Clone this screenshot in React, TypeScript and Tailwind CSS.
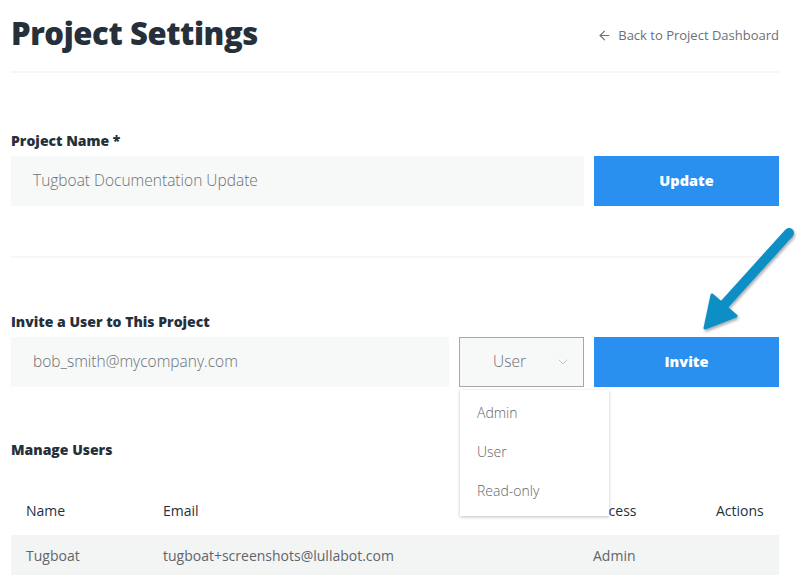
import { ArrowLeft, ChevronDown } from 'lucide-react';

const users = [{ name: 'Tugboat', email: 'tugboat+screenshots@lullabot.com', access: 'Admin' }];

function PointerArrow() {
  return (
    <svg className="absolute left-[696px] top-[222px] pointer-events-none" width="103" height="115" viewBox="0 0 103 115">
      <defs>
        <filter id="sh" x="-20%" y="-20%" width="140%" height="140%">
          <feDropShadow dx="1" dy="2" stdDeviation="1.5" floodColor="#000" floodOpacity="0.35" />
        </filter>
      </defs>
      <g filter="url(#sh)">
        <line x1="93" y1="11" x2="27" y2="84" stroke="#0a8fc6" strokeWidth="10" strokeLinecap="round" />
        <path d="M9 106 L16 73 L40 94 Z" fill="#0a8fc6" stroke="#0a8fc6" strokeWidth="3" strokeLinejoin="round" />
      </g>
    </svg>
  );
}

export default function App() {
  return (
    <div className="relative w-[799px] h-[586px] overflow-hidden bg-white font-['Open_Sans',sans-serif] text-[#25303b]">
      <div className="pl-[11px] pr-[20px]">
        {/* Header */}
        <div className="flex items-end justify-between pt-[9px] pb-[14px] border-b-2 border-[#f5f7f7]">
          <h1 className="font-extrabold text-[31px] leading-[48px] tracking-[-0.4px]">Project Settings</h1>
          <a className="flex items-center gap-[6px] text-[13px] text-[#6b7178] mb-[12px]">
            <ArrowLeft className="w-[15px] h-[15px]" strokeWidth={1.75} />
            Back to Project Dashboard
          </a>
        </div>

        {/* Project name */}
        <div className="pt-[58px] pb-[50px] border-b-2 border-[#f5f7f7]">
          <label className="block font-extrabold text-[14px] leading-[20px] mb-[5px]">Project Name *</label>
          <div className="flex gap-[10px]">
            <div className="flex-1 h-[50px] bg-[#f7f8f8] flex items-center pl-[22px] text-[15.5px] font-light text-[#6b7075]">
              Tugboat Documentation Update
            </div>
            <button className="w-[185px] h-[50px] bg-[#2a90f0] text-white font-extrabold text-[14.5px]">Update</button>
          </div>
        </div>

        {/* Invite */}
        <div className="pt-[54px]">
          <label className="block font-extrabold text-[14px] leading-[20px] mb-[5px]">Invite a User to This Project</label>
          <div className="flex gap-[10px]">
            <div className="flex-1 h-[50px] bg-[#f7f8f8] flex items-center pl-[22px] text-[15.5px] font-light text-[#6b7075]">
              bob_smith@mycompany.com
            </div>
            <div className="relative w-[125px] h-[50px] bg-[#f7f8f8] border border-[#a5a8aa] flex items-center">
              <span className="flex-1 text-center text-[15.5px] font-light text-[#6b7075] pr-[24px]">User</span>
              <ChevronDown className="absolute right-[12px] w-[16px] h-[16px] text-[#c3c6c8]" strokeWidth={1.5} />
              <ul className="absolute left-0 top-[52px] w-[149px] bg-white shadow-[0_1px_3px_rgba(0,0,0,0.25)] z-10 pt-[3px] pb-[6px] text-[14px] font-light text-[#5f656b]">
                <li className="h-[39px] flex items-center pl-[17px]">Admin</li>
                <li className="h-[39px] flex items-center pl-[17px]">User</li>
                <li className="h-[39px] flex items-center pl-[17px]">Read-only</li>
              </ul>
            </div>
            <button className="w-[185px] h-[50px] bg-[#2a90f0] text-white font-extrabold text-[14.5px]">Invite</button>
          </div>
        </div>

        {/* Manage users */}
        <div className="pt-[53px]">
          <h2 className="font-extrabold text-[14px] leading-[20px]">Manage Users</h2>
          <table className="w-full mt-[28px] text-[14px] text-left">
            <thead>
              <tr className="h-[47px] text-[#25303b]">
                <th className="font-normal pl-[15px] pb-[3px] w-[152px]">Name</th>
                <th className="font-normal pb-[3px] w-[430px]">Email</th>
                <th className="font-normal pb-[3px] w-[123px]">Access</th>
                <th className="font-normal pb-[3px]">Actions</th>
              </tr>
            </thead>
            <tbody>
              {users.map((u) => (
                <tr key={u.email} className="h-[40px] bg-[#f3f4f4] text-[#5f656b]">
                  <td className="pl-[15px]">{u.name}</td>
                  <td>{u.email}</td>
                  <td>{u.access}</td>
                  <td></td>
                </tr>
              ))}
            </tbody>
          </table>
        </div>
      </div>
      <PointerArrow />
    </div>
  );
}
